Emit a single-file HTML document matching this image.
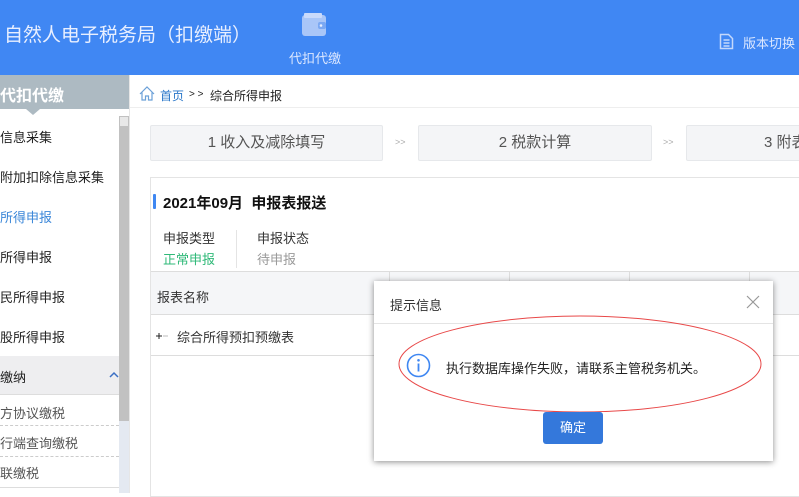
<!DOCTYPE html>
<html><head><meta charset="utf-8"><style>
*{margin:0;padding:0;box-sizing:border-box}
body{width:799px;height:493px;overflow:hidden;position:relative;background:#fff;font-family:"Liberation Sans","Noto Sans CJK SC",sans-serif;color:#333}
.a{position:absolute;white-space:nowrap}
</style></head><body>
<div class="a" style="left:0;top:0;width:799px;height:75px;background:#4087f3"></div>
<div class="a" style="left:4px;top:20px;font-size:19px;color:#e8efff">自然人电子税务局（扣缴端）</div>
<svg class="a" style="left:300px;top:12px" width="28" height="26" viewBox="0 0 28 26"><rect x="2" y="3" width="24" height="21" rx="3" fill="#a9c6f8"/><rect x="4" y="1" width="18" height="5" rx="1" fill="#c9dafb"/><rect x="18" y="10" width="8" height="7" rx="2" fill="#7aa8f3"/><circle cx="21" cy="13.5" r="1.3" fill="#e8efff"/></svg>
<div class="a" style="left:289px;top:48px;font-size:13px;color:#dbe7ff">代扣代缴</div>
<svg class="a" style="left:719px;top:33px" width="15" height="17" viewBox="0 0 15 17"><path d="M1.5 1.5h8l4 4v10h-12z" fill="none" stroke="#c4d8fb" stroke-width="1.5"/><path d="M4.5 7h6M4.5 10h6M4.5 13h6" stroke="#c4d8fb" stroke-width="1.4"/></svg>
<div class="a" style="left:743px;top:33px;font-size:13px;color:#dbe7ff">版本切换</div>

<div class="a" style="left:0;top:75px;width:129px;height:34px;background:#adbac2"></div>
<div class="a" style="left:0;top:82px;font-size:16px;font-weight:bold;color:#fff">代扣代缴</div>
<div class="a" style="left:26px;top:109px;width:0;height:0;border-left:7px solid transparent;border-right:7px solid transparent;border-top:6px solid #adbac2"></div>
<div class="a" style="left:119px;top:116px;width:10px;height:377px;background:#e4e9f1"></div>
<div class="a" style="left:119px;top:116px;width:10px;height:305px;background:#c1c1c1"></div>
<div class="a" style="left:120px;top:117px;width:8px;height:9px;background:#e8e8e8"></div>
<div class="a" style="left:0;top:127px;font-size:13px;color:#222">信息采集</div>
<div class="a" style="left:0;top:167px;font-size:13px;color:#222">附加扣除信息采集</div>
<div class="a" style="left:0;top:207px;font-size:13px;color:#3a86d8">所得申报</div>
<div class="a" style="left:0;top:247px;font-size:13px;color:#222">所得申报</div>
<div class="a" style="left:0;top:287px;font-size:13px;color:#222">民所得申报</div>
<div class="a" style="left:0;top:327px;font-size:13px;color:#222">股所得申报</div>
<div class="a" style="left:0;top:356px;width:119px;height:39px;background:#eeeef0;border-bottom:1px solid #ddd"></div>
<div class="a" style="left:0;top:367px;font-size:13px;color:#222">缴纳</div>
<svg class="a" style="left:109px;top:371px" width="10" height="7" viewBox="0 0 10 7"><path d="M1 6l4-4 4 4" fill="none" stroke="#3a6fc4" stroke-width="1.5"/></svg>
<div class="a" style="left:0;top:403px;font-size:13px;color:#555">方协议缴税</div>
<div class="a" style="left:0;top:425px;width:119px;border-top:1px dashed #ccc"></div>
<div class="a" style="left:0;top:433px;font-size:13px;color:#555">行端查询缴税</div>
<div class="a" style="left:0;top:456px;width:119px;border-top:1px dashed #ccc"></div>
<div class="a" style="left:0;top:463px;font-size:13px;color:#555">联缴税</div>
<div class="a" style="left:0;top:487px;width:119px;border-top:1px solid #ddd"></div>
<div class="a" style="left:129px;top:75px;width:1px;height:418px;background:#e6e6e6"></div>

<svg class="a" style="left:139px;top:86px" width="16" height="15" viewBox="0 0 16 15"><path d="M1 8L8 1l7 7M3 6.5V14h3.5v-4h3v4H13V6.5" fill="none" stroke="#6ba0d8" stroke-width="1.2"/></svg>
<div class="a" style="left:160px;top:87px;font-size:12px;color:#2a77c9">首页</div>
<div class="a" style="left:189px;top:89px;font-size:10px;color:#222">&gt; &gt;</div>
<div class="a" style="left:210px;top:87px;font-size:12px;color:#222">综合所得申报</div>
<div class="a" style="left:130px;top:107px;width:669px;height:1px;background:#eee"></div>

<div class="a" style="left:150px;top:125px;width:233px;height:36px;background:#f4f5f7;border:1px solid #e6e8eb;border-radius:2px;text-align:center;line-height:34px;font-size:15px;color:#555">1 收入及减除填写</div>
<div class="a" style="left:395px;top:137px;font-size:9px;color:#aaa">&gt;&gt;</div>
<div class="a" style="left:418px;top:125px;width:234px;height:36px;background:#f4f5f7;border:1px solid #e6e8eb;border-radius:2px;text-align:center;line-height:34px;font-size:15px;color:#555">2 税款计算</div>
<div class="a" style="left:663px;top:137px;font-size:9px;color:#aaa">&gt;&gt;</div>
<div class="a" style="left:686px;top:125px;width:120px;height:36px;background:#f4f5f7;border:1px solid #e6e8eb;border-radius:2px;line-height:34px;font-size:15px;color:#555;padding-left:77px">3 附表</div>

<div class="a" style="left:150px;top:177px;width:660px;height:320px;border:1px solid #e4e4e4"></div>
<div class="a" style="left:153px;top:194px;width:3px;height:15px;background:#3f87f2;border-radius:1px"></div>
<div class="a" style="left:163px;top:192px;font-size:15px;font-weight:bold;color:#111">2021年09月&nbsp; 申报表报送</div>
<div class="a" style="left:163px;top:228px;font-size:13px;color:#333">申报类型</div>
<div class="a" style="left:163px;top:249px;font-size:13px;color:#2fb978">正常申报</div>
<div class="a" style="left:236px;top:230px;width:1px;height:38px;background:#e4e4e4"></div>
<div class="a" style="left:257px;top:228px;font-size:13px;color:#333">申报状态</div>
<div class="a" style="left:257px;top:249px;font-size:13px;color:#999">待申报</div>
<div class="a" style="left:151px;top:271px;width:648px;height:44px;background:#f5f6f8;border-top:1px solid #ddd;border-bottom:1px solid #ddd"></div>
<div class="a" style="left:389px;top:271px;width:1px;height:44px;background:#ddd"></div>
<div class="a" style="left:509px;top:271px;width:1px;height:44px;background:#ddd"></div>
<div class="a" style="left:629px;top:271px;width:1px;height:44px;background:#ddd"></div>
<div class="a" style="left:749px;top:271px;width:1px;height:44px;background:#ddd"></div>
<div class="a" style="left:157px;top:287px;font-size:13px;color:#333">报表名称</div>
<svg class="a" style="left:155px;top:332px" width="14" height="8" viewBox="0 0 14 8"><path d="M1 4h6M4 1v6" stroke="#222" stroke-width="1"/><path d="M8 4h5" stroke="#bbb" stroke-width="1"/></svg>
<div class="a" style="left:177px;top:327px;font-size:13px;color:#333">综合所得预扣预缴表</div>
<div class="a" style="left:151px;top:355px;width:648px;height:1px;background:#ddd"></div>

<div class="a" style="left:374px;top:281px;width:399px;height:180px;background:#fff;box-shadow:0 1px 6px rgba(0,0,0,.45)"></div>
<div class="a" style="left:390px;top:295px;font-size:13px;color:#333">提示信息</div>
<svg class="a" style="left:746px;top:295px" width="14" height="14" viewBox="0 0 14 14"><path d="M1 1l12 12M13 1L1 13" stroke="#999" stroke-width="1.2"/></svg>
<div class="a" style="left:374px;top:323px;width:399px;height:1px;background:#e4e4e4"></div>
<svg class="a" style="left:380px;top:308px" width="400" height="104" viewBox="0 0 400 104"><ellipse cx="200" cy="56" rx="181" ry="48" fill="none" stroke="#e84848" stroke-width="1"/></svg>
<svg class="a" style="left:406px;top:353px" width="25" height="25" viewBox="0 0 25 25"><circle cx="12.5" cy="12.5" r="11" fill="none" stroke="#3f87f2" stroke-width="1.6"/><circle cx="12.5" cy="7.3" r="1.3" fill="#3f87f2"/><path d="M12.5 10.5v8" stroke="#3f87f2" stroke-width="1.8"/></svg>
<div class="a" style="left:446px;top:358px;font-size:13px;color:#222">执行数据库操作失败，请联系主管税务机关。</div>
<div class="a" style="left:543px;top:412px;width:60px;height:32px;background:#3478db;border-radius:3px;color:#fff;font-size:13px;text-align:center;line-height:32px">确定</div>
</body></html>
